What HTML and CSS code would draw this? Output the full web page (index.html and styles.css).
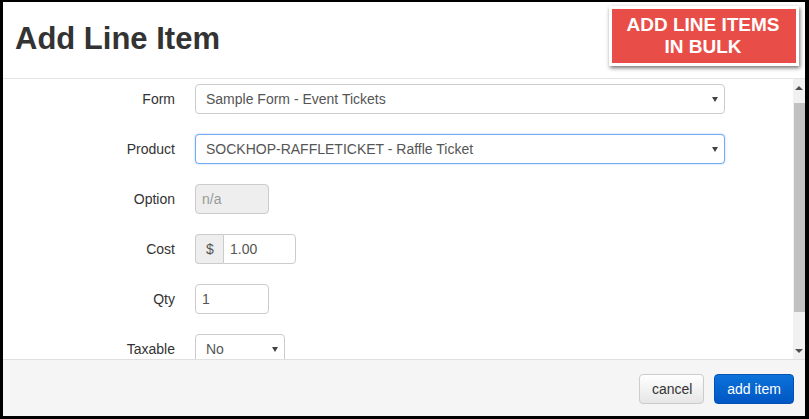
FILE: index.html
```html
<!DOCTYPE html>
<html lang="en">
<head>
<meta charset="utf-8">
<title>Add Line Item</title>
<link rel="stylesheet" href="styles.css">
</head>
<body>
<div class="frame">
  <header class="head">
    <h1 class="title">Add Line Item</h1>
    <div class="banner">ADD LINE ITEMS<br>IN BULK</div>
  </header>
  <div class="main">
    <div class="content">
      <div class="form">
        <label class="lbl">Form</label>
        <div class="field"><div class="select wide"><span>Sample Form - Event Tickets</span><i class="caret"></i></div></div>

        <label class="lbl">Product</label>
        <div class="field"><div class="select wide focus"><span>SOCKHOP-RAFFLETICKET - Raffle Ticket</span><i class="caret"></i></div></div>

        <label class="lbl">Option</label>
        <div class="field"><input class="input small disabled" type="text" placeholder="n/a" disabled></div>

        <label class="lbl">Cost</label>
        <div class="field"><div class="group"><span class="addon">$</span><input class="input grouped" type="text" value="1.00"></div></div>

        <label class="lbl">Qty</label>
        <div class="field"><input class="input small qty" type="text" value="1"></div>

        <label class="lbl">Taxable</label>
        <div class="field"><div class="select tax"><span>No</span><i class="caret"></i></div></div>
      </div>
    </div>
    <div class="scrollbar">
      <div class="sbtn"><i class="up"></i></div>
      <div class="sgap"></div>
      <div class="thumb"></div>
      <div class="sfill"></div>
      <div class="sbtn"><i class="down"></i></div>
    </div>
  </div>
  <footer class="foot">
    <button class="btn cancel" type="button">cancel</button>
    <button class="btn primary" type="button">add item</button>
  </footer>
</div>
</body>
</html>
```
FILE: styles.css
```css
* { box-sizing: border-box; }
html, body { margin: 0; padding: 0; }
body {
  background: #000;
  width: 809px;
  height: 419px;
  overflow: hidden;
  font-family: "Liberation Sans", Arial, sans-serif;
}
.frame {
  margin: 2px 4px 3px 3px;
  height: 414px;
  background: #fff;
  display: flex;
  flex-direction: column;
  position: relative;
  overflow: hidden;
}
.head {
  height: 77px;
  flex: none;
  border-bottom: 1px solid #e5e5e5;
  padding: 19px 15px 0 12px;
}
.title {
  margin: 0;
  font-size: 31px;
  line-height: 36px;
  font-weight: bold;
  color: #333;
}
.banner {
  position: absolute;
  top: 4px;
  right: 6px;
  width: 190px;
  height: 60px;
  border: 3px solid #fff;
  background: #e84d47;
  box-shadow: 1px 2px 4px rgba(0,0,0,0.55);
  color: #fff;
  font-weight: bold;
  font-size: 19px;
  line-height: 22px;
  text-align: center;
  padding-top: 5px;
  padding-right: 2px;
}
.main {
  height: 280px;
  flex: none;
  display: flex;
}
.content {
  flex: 1;
  overflow: hidden;
  padding-top: 5px;
}
.form {
  display: grid;
  grid-template-columns: 172px auto;
  column-gap: 20px;
  row-gap: 20px;
  align-items: center;
}
.lbl {
  text-align: right;
  font-size: 14px;
  color: #333;
  line-height: 30px;
}
.field { height: 30px; display: flex; }
.select {
  height: 30px;
  border: 1px solid #ccc;
  border-radius: 4px;
  background: #fff;
  display: flex;
  align-items: center;
  padding: 0 6px 0 10px;
  font-size: 14px;
  color: #555;
}
.select.wide { width: 530px; }
.select.tax { width: 90px; }
.select.focus {
  border-color: #74aaf0;
  box-shadow: 0 0 2px rgba(102,160,233,0.6);
}
.caret {
  margin-left: auto;
  margin-top: 1px;
  width: 0;
  height: 0;
  border-left: 3.5px solid transparent;
  border-right: 3.5px solid transparent;
  border-top: 5px solid #444;
}
.input {
  height: 30px;
  border: 1px solid #ccc;
  border-radius: 4px;
  background: #fff;
  font-family: "Liberation Sans", Arial, sans-serif;
  font-size: 14px;
  color: #555;
  padding: 0 6px;
  margin: 0;
  outline: none;
}
.input.small { width: 74px; }
.input.disabled { background: #eee; }
.input.disabled::placeholder { color: #999; }
.group { display: flex; height: 30px; }
.addon {
  width: 28px;
  height: 30px;
  border: 1px solid #ccc;
  border-right: 0;
  border-radius: 4px 0 0 4px;
  background: #eee;
  color: #555;
  font-size: 14px;
  line-height: 28px;
  padding-left: 10px;
}
.input.grouped {
  width: 73px;
  border-radius: 0 4px 4px 0;
  padding-left: 6px;
}
.scrollbar {
  width: 12px;
  flex: none;
  background: #f1f1f1;
  display: flex;
  flex-direction: column;
}
.sbtn {
  height: 17px;
  flex: none;
  display: flex;
  align-items: center;
  justify-content: center;
}
.up, .down {
  width: 0;
  height: 0;
  border-left: 4px solid transparent;
  border-right: 4px solid transparent;
}
.up { border-bottom: 4px solid #505050; }
.down { border-top: 4px solid #505050; }
.sgap { height: 7px; flex: none; }
.thumb { height: 209px; flex: none; background: #c1c1c1; margin-left: 1px; }
.sfill { flex: 1; }
.foot {
  flex: 1;
  border-top: 1px solid #e0e0e0;
  background: #f5f5f5;
  display: flex;
  justify-content: flex-end;
  align-items: flex-start;
  gap: 10px;
  padding: 14px 11px 0 0;
}
.btn {
  height: 30px;
  border-radius: 4px;
  font-family: "Liberation Sans", Arial, sans-serif;
  font-size: 14px;
  padding: 0 12px;
  margin: 0;
  cursor: pointer;
}
.cancel {
  width: 65px;
  background: linear-gradient(#fff, #e6e6e6);
  border: 1px solid #ccc;
  color: #333;
}
.primary {
  width: 80px;
  background: linear-gradient(#0b72da, #0057c4);
  border: 1px solid #0052b4;
  color: #fff;
}
```
